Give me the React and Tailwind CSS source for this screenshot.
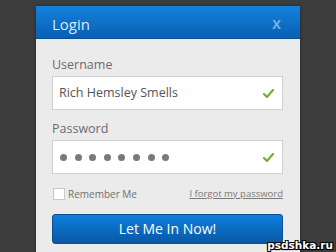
export default function App() {
  const font = { fontFamily: '"Open Sans", "DejaVu Sans", sans-serif' };
  return (
    <div className="relative w-[336px] h-[252px] overflow-hidden bg-[#3d3d3d] pt-[6px] pl-[36px]" style={font}>
      <div className="w-[264px] h-[260px] bg-[#ebebeb] shadow-[0_0_3px_rgba(0,0,0,0.5)]">
        <div className="h-[33px] bg-gradient-to-b from-[#1483dd] to-[#0860b2] border-b border-[#0a4f92] flex items-center justify-between pl-[16px] pr-[19px] pt-[4px]">
          <span className="text-[15px] font-medium text-[#dce9f6] leading-none">Login</span>
          <span className="text-[13px] font-bold text-[#7fb2e4] leading-none">X</span>
        </div>
        <div className="px-[16px] pt-[17px]">
          <div className="text-[12.5px] font-medium leading-[18px] text-[#6c6c6c]">Username</div>
          <div className="mt-[2px] h-[34px] w-[231px] bg-white border border-[#cfcfcf] flex items-center justify-between pl-[6px] pr-[8px]">
            <span className="text-[12.5px] font-medium text-[#555]">Rich Hemsley Smells</span>
            <Check />
          </div>
          <div className="mt-[10px] text-[12.5px] font-medium leading-[18px] text-[#6c6c6c]">Password</div>
          <div className="mt-[2px] h-[34px] w-[231px] bg-white border border-[#cfcfcf] flex items-center justify-between pl-[7px] pr-[8px]">
            <div className="flex gap-[7.6px]">
              {[0, 1, 2, 3, 4, 5, 6, 7].map((i) => (
                <span key={i} className="w-[7px] h-[7px] rounded-full bg-[#7a7a7a]" />
              ))}
            </div>
            <Check />
          </div>
          <div className="mt-[14px] w-[231px] flex items-center justify-between h-[12px]">
            <div className="flex items-center gap-[3px] pl-[1px]">
              <span className="w-[12px] h-[12px] bg-white border border-[#c8c8c8]" />
              <span className="text-[10px] font-medium text-[#707070]">Remember Me</span>
            </div>
            <span className="text-[9.5px] font-medium text-[#7a7a7a] underline">I forgot my password</span>
          </div>
          <div className="mt-[14px] w-[231px] h-[30px] rounded-[3px] bg-gradient-to-b from-[#0d7fdc] to-[#0958a6] border border-[#0a4e94] flex items-center justify-center">
            <span className="text-[14px] font-medium text-white leading-none">Let Me In Now!</span>
          </div>
        </div>
      </div>
      <div
        className="absolute right-[3px] bottom-[2px] text-[10.5px] font-bold text-white leading-none"
        style={{
          fontFamily: '"DejaVu Sans", sans-serif',
          textShadow: '1px 1px 0 #000, -1px -1px 0 #000, 1px -1px 0 #000, -1px 1px 0 #000, 0 1px 1px #000',
        }}
      >
        psdshka.ru
      </div>
    </div>
  );
}

function Check() {
  return (
    <svg width="11" height="9" viewBox="0 0 11 9">
      <path d="M1 5 L4 8 L10 1" fill="none" stroke="#78b02a" strokeWidth="2.2" strokeLinecap="round" strokeLinejoin="round" />
    </svg>
  );
}
